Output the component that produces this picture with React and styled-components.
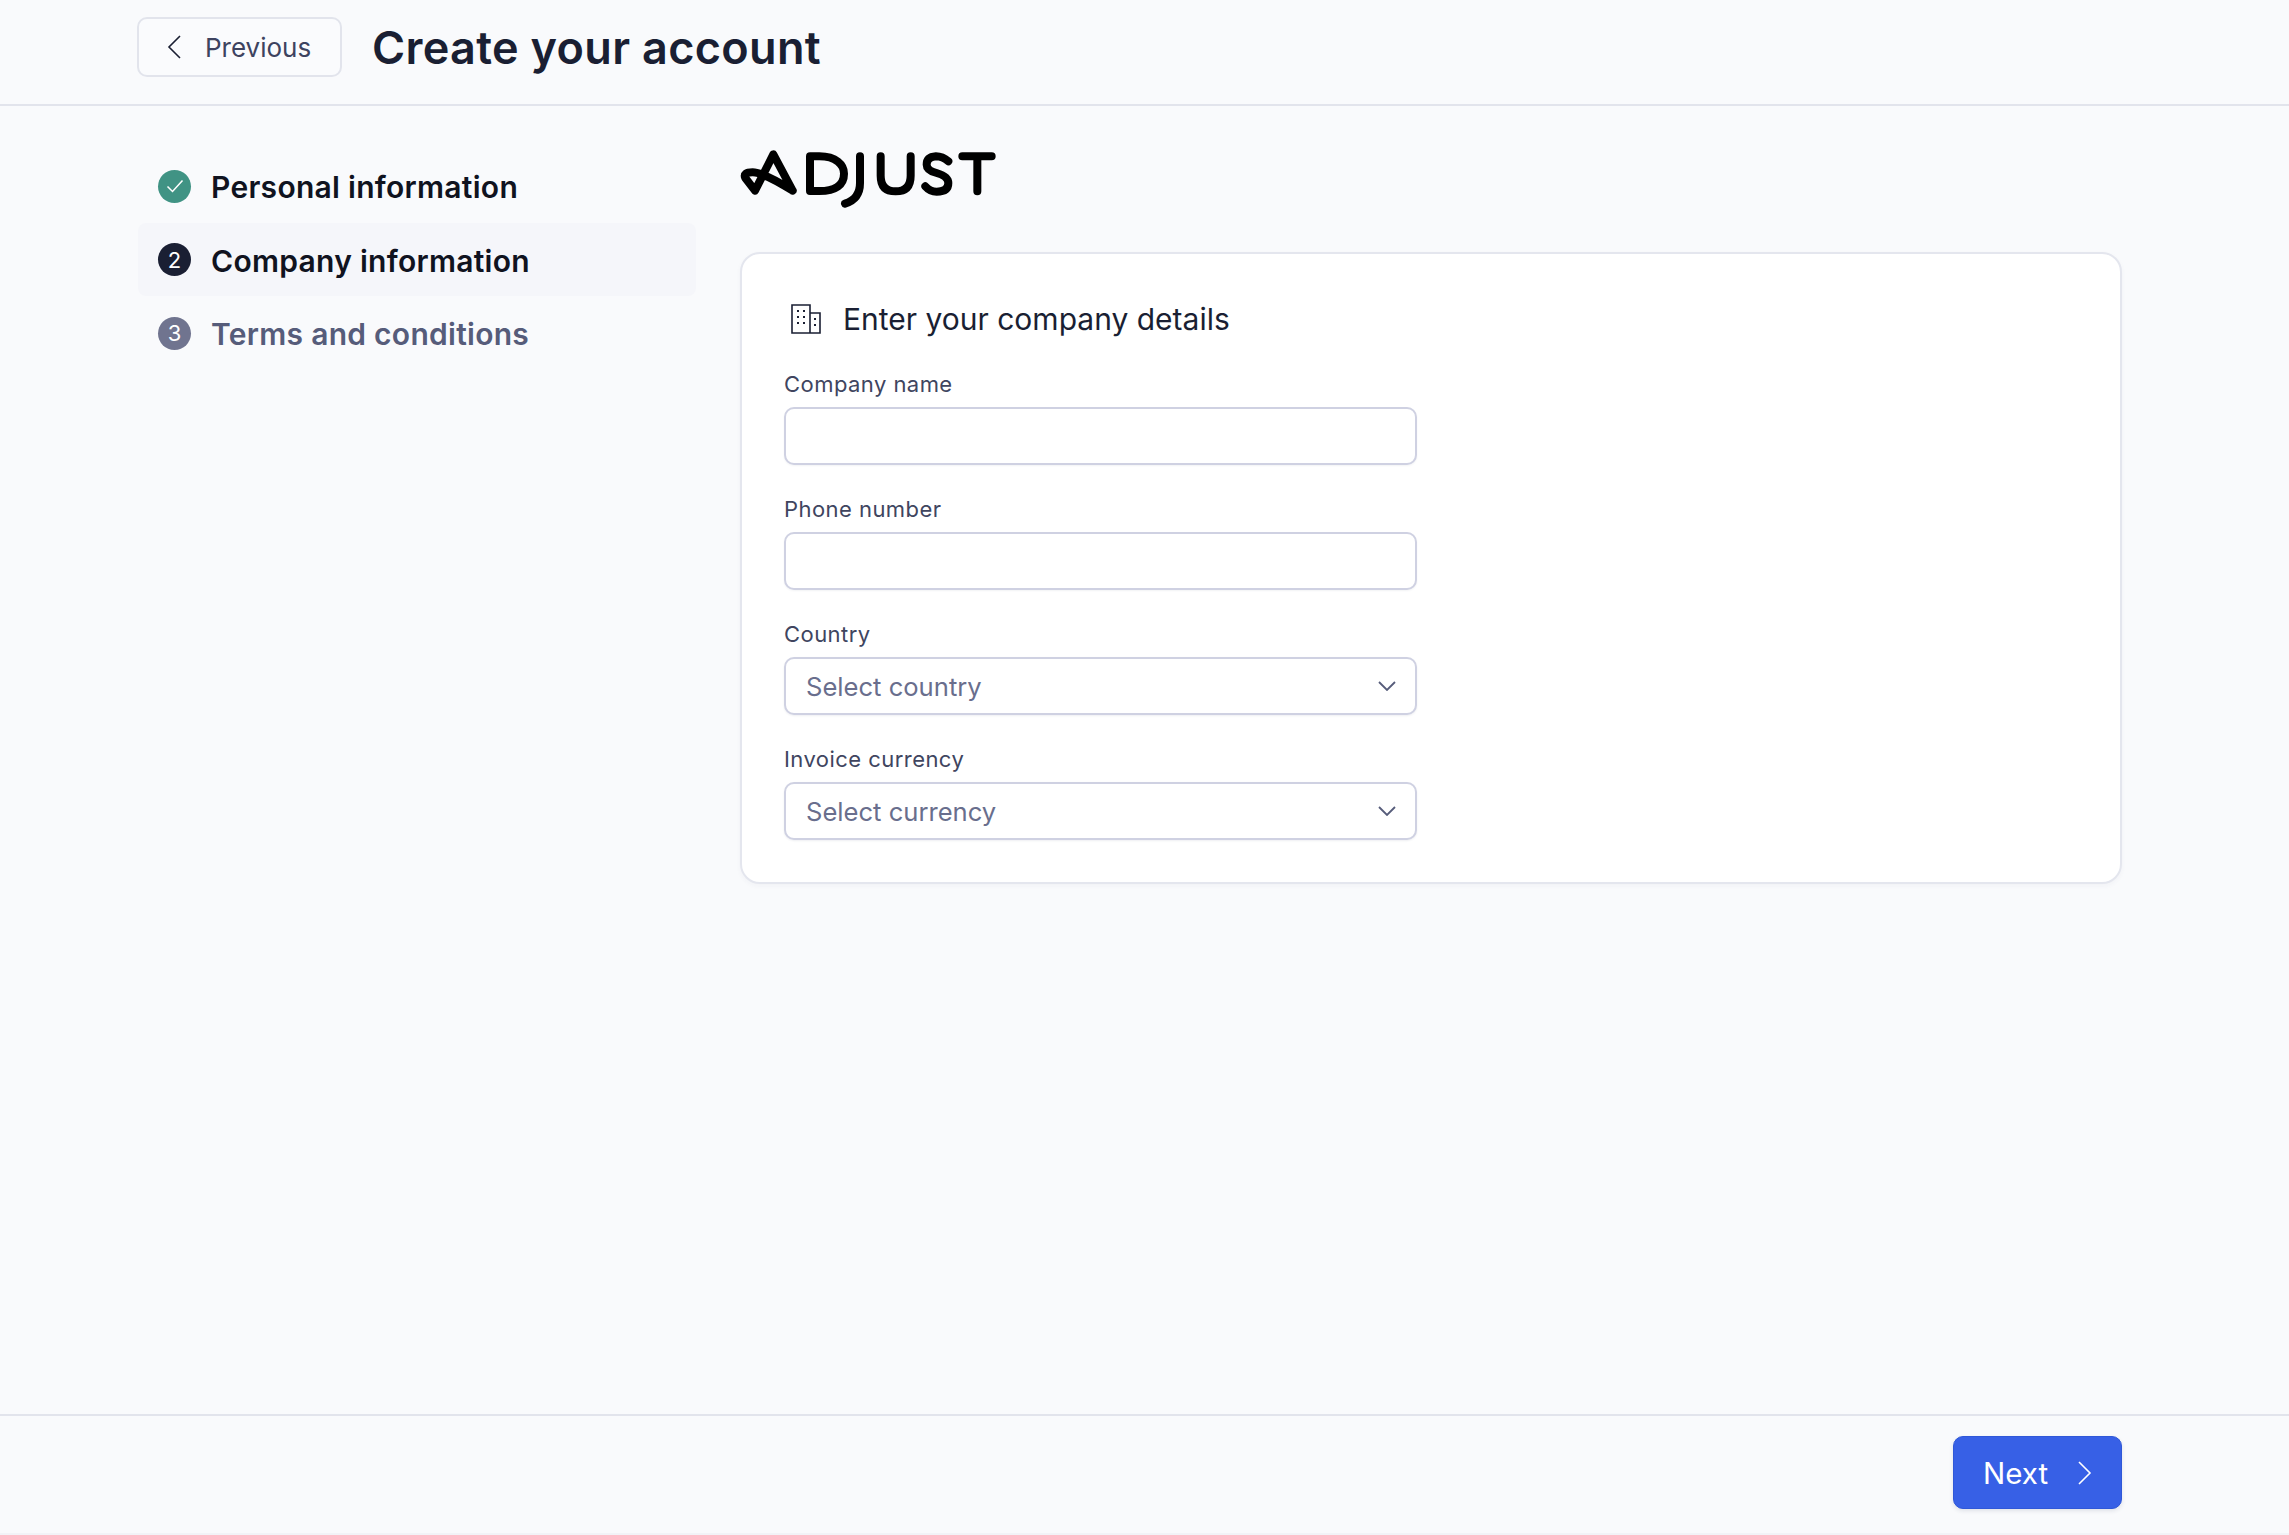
import React from "react";
import styled, { createGlobalStyle } from "styled-components";

const Global = createGlobalStyle`
  html, body { margin: 0; padding: 0; background: #f9fafc; }
  * { box-sizing: border-box; }
  body { font-family: Inter, "Noto Sans", sans-serif; color: #1a1f33; }
`;

const Page = styled.div`
  height: 1535px;
  display: flex;
  flex-direction: column;
  overflow: hidden;
`;
const Header = styled.header`
  height: 106px;
  flex: none;
  border-bottom: 2px solid #e2e4ec;
  display: flex;
  align-items: flex-start;
  padding: 17px 0 0 137px;
  gap: 30px;
`;
const BackButton = styled.button`
  width: 205px;
  height: 60px;
  border: 2px solid #e2e4ec;
  border-radius: 10px;
  background: #fafbfd;
  display: flex;
  align-items: center;
  padding: 0 0 0 28px;
  gap: 24px;
  font: 400 26px Inter, sans-serif;
  color: #3d4360;
`;
const Title = styled.h1`
  margin: 0;
  font-size: 45px;
  line-height: 62px;
  font-weight: 600;
  letter-spacing: 0.33px;
  color: #1a1f33;
`;
const Main = styled.main`
  flex: 1;
  display: grid;
  grid-template-columns: 558px 1382px;
  column-gap: 44px;
  padding: 0 0 0 138px;
`;
const Steps = styled.nav`
  display: flex;
  flex-direction: column;
  padding-top: 43.6px;
`;
const Step = styled.div`
  height: 73.4px;
  display: flex;
  align-items: center;
  gap: 20px;
  padding-left: 20px;
  border-radius: 8px;
  background: ${(p) => (p.$active ? "#f5f6fa" : "transparent")};
  color: ${(p) => (p.$muted ? "#565c7a" : "#10131f")};
`;
const StepLabel = styled.span`
  font-size: 30px;
  line-height: 36px;
  font-weight: 600;
  letter-spacing: 0.28px;
  padding-top: 2px;
`;
const Badge = styled.span`
  width: 33px;
  height: 33px;
  border-radius: 50%;
  flex: none;
  display: flex;
  align-items: center;
  justify-content: center;
  background: ${(p) => p.$bg};
  color: #fff;
  font-size: 22px;
  font-weight: 400;
`;
const Content = styled.section`
  display: flex;
  flex-direction: column;
`;
const LogoSlot = styled.div`
  height: 146px;
  flex: none;
  padding-top: 43px;
`;
const Card = styled.form`
  height: 632px;
  background: #fff;
  border: 2px solid #e4e6ee;
  border-radius: 20px;
  padding: 42px 42px;
  box-shadow: 0 2px 5px rgba(40, 50, 90, 0.04);
`;
const CardTitle = styled.div`
  height: 46px;
  display: flex;
  align-items: center;
  gap: 22px;
  margin-left: 7px;
  margin-bottom: 27px;
  font-size: 30px;
  font-weight: 400;
  color: #1a1f33;
`;
const Field = styled.div`
  width: 633px;
  margin-bottom: 29px;
  &:last-child { margin-bottom: 0; }
`;
const Label = styled.label`
  display: block;
  height: 30px;
  line-height: 30px;
  margin-bottom: 8px;
  font-size: 22px;
  letter-spacing: 0.45px;
  color: #40455f;
`;
const Input = styled.input`
  display: block;
  width: 100%;
  height: 58px;
  border: 2px solid #cfd1e2;
  border-radius: 10px;
  background: #fff;
  outline: none;
  padding: 0 20px;
  font: 400 26px Inter, sans-serif;
  box-shadow: 0 1px 2px rgba(40, 50, 90, 0.06);
`;
const Select = styled.button`
  display: flex;
  align-items: center;
  justify-content: space-between;
  width: 100%;
  height: 58px;
  border: 2px solid #cfd1e2;
  border-radius: 10px;
  background: #fff;
  padding: 0 19px 0 20px;
  font: 400 25.6px Inter, sans-serif;
  color: #696e8d;
  box-shadow: 0 1px 2px rgba(40, 50, 90, 0.08);
`;
const Footer = styled.footer`
  height: 121px;
  flex: none;
  border-top: 2px solid #e2e4ec;
  border-bottom: 2px solid #f2f3f7;
  display: flex;
  justify-content: flex-end;
  align-items: flex-start;
  padding: 20px 167px 0 0;
`;
const NextButton = styled.button`
  width: 169px;
  height: 73px;
  border: 1px solid #2f58d8;
  border-radius: 10px;
  background: #3760e6;
  color: #fff;
  display: flex;
  align-items: center;
  justify-content: space-between;
  padding: 0 29px;
  font: 400 29.5px Inter, sans-serif;
  box-shadow: 0 2px 4px rgba(40, 50, 90, 0.12);
`;

const Chevron = ({ dir, color }) => (
  <svg width="14" height="24" viewBox="0 0 14 24" fill="none">
    <path
      d={dir === "left" ? "M13 1 L2 12 L13 23" : "M1 1 L12 12 L1 23"}
      stroke={color}
      strokeWidth="1.6"
    />
  </svg>
);
const ChevronDown = () => (
  <svg width="18" height="10" viewBox="0 0 18 10" fill="none">
    <path d="M1 1 L9 9 L17 1" stroke="#565c7a" strokeWidth="1.8" />
  </svg>
);
const Check = () => (
  <svg width="18" height="14" viewBox="0 0 18 14" fill="none">
    <path d="M1.5 7.5 L6.5 12.5 L16.5 1.5" stroke="#fff" strokeWidth="1.5" />
  </svg>
);
const Building = () => (
  <svg width="30" height="30" viewBox="0 0 30 30" fill="none">
    <path d="M1 29 V1 H19 V29 Z M19 9 H29 V29 H19" stroke="#1a1f33" strokeWidth="1.6" />
    <g fill="#1a1f33">
      <rect x="6" y="6" width="2" height="2" /><rect x="12" y="6" width="2" height="2" />
      <rect x="6" y="12" width="2" height="2" /><rect x="12" y="12" width="2" height="2" />
      <rect x="6" y="18" width="2" height="2" /><rect x="12" y="18" width="2" height="2" />
      <rect x="23" y="14" width="2" height="2" /><rect x="23" y="20" width="2" height="2" />
    </g>
  </svg>
);
const Logo = () => (
  <svg width="257" height="59" viewBox="30 58 771 177" fill="none" stroke="#000" strokeWidth="24" strokeLinecap="round" strokeLinejoin="round">
    <path d="M188 183 L130 74 L75 183 L46 145 Q38 128 68 128 Q100 128 188 183" />
    <path d="M240 80 H268 C318 80 342 105 342 132 C342 165 318 184 268 184 H240 Z" />
    <path d="M390 80 V160 Q390 208 345 222" />
    <path d="M452 80 V138 Q452 185 497 185 Q542 185 542 138 V80" />
    <path d="M655 95 Q638 80 618 80 Q590 82 590 105 Q590 122 620 130 Q655 140 655 160 Q655 186 620 186 Q600 186 586 170" />
    <path d="M697 80 H785 M742 80 V185" />
  </svg>
);

const fields = [
  { label: "Company name" },
  { label: "Phone number" },
  { label: "Country", placeholder: "Select country" },
  { label: "Invoice currency", placeholder: "Select currency" },
];

export default function App() {
  return (
    <Page>
      <Global />
      <Header>
        <BackButton type="button">
          <Chevron dir="left" color="#1a1f33" />
          Previous
        </BackButton>
        <Title>Create your account</Title>
      </Header>
      <Main>
        <Steps>
          <Step><Badge $bg="#409384"><Check /></Badge><StepLabel>Personal information</StepLabel></Step>
          <Step $active><Badge $bg="#1a1f33">2</Badge><StepLabel>Company information</StepLabel></Step>
          <Step $muted><Badge $bg="#70748f">3</Badge><StepLabel>Terms and conditions</StepLabel></Step>
        </Steps>
        <Content>
          <LogoSlot><Logo /></LogoSlot>
          <Card>
            <CardTitle><Building />Enter your company details</CardTitle>
            {fields.map((f) => (
              <Field key={f.label}>
                <Label>{f.label}</Label>
                {f.placeholder ? (
                  <Select type="button">{f.placeholder}<ChevronDown /></Select>
                ) : (
                  <Input type="text" />
                )}
              </Field>
            ))}
          </Card>
        </Content>
      </Main>
      <Footer>
        <NextButton type="button">
          Next
          <Chevron dir="right" color="#fff" />
        </NextButton>
      </Footer>
    </Page>
  );
}
